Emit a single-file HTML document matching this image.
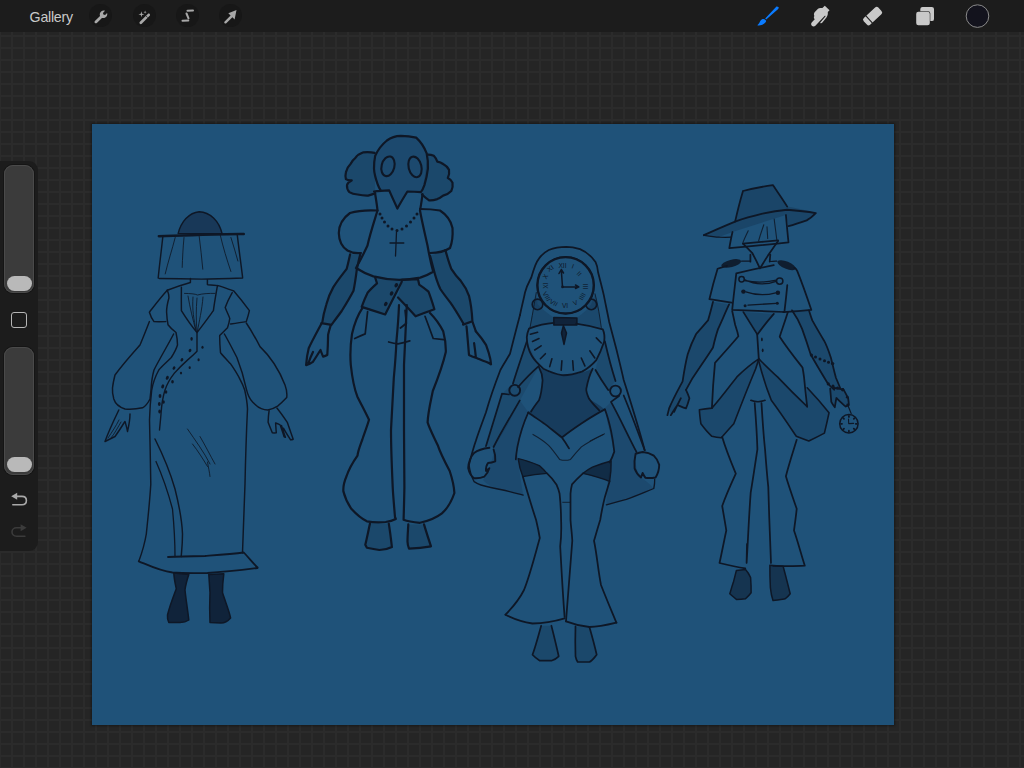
<!DOCTYPE html>
<html><head><meta charset="utf-8">
<style>
html,body{margin:0;padding:0;width:1024px;height:768px;overflow:hidden;background:#252525;font-family:"Liberation Sans",sans-serif;}
#grid{position:absolute;left:0;top:0;width:1024px;height:768px;
background-image:linear-gradient(to right,#2b2b2b 0,#2b2b2b 2px,transparent 2px),linear-gradient(to bottom,#2b2b2b 0,#2b2b2b 2px,transparent 2px);
background-size:12px 12px;background-position:-1px -1px;}
#bar{position:absolute;left:0;top:0;width:1024px;height:32px;background:#1c1c1c;}
#gal{position:absolute;left:29.6px;top:8.7px;font-size:14.2px;color:#c9c9c9;letter-spacing:-0.25px;}
.circ{position:absolute;top:4px;width:23px;height:23px;border-radius:50%;background:#171717;}
#side{position:absolute;left:-10px;top:161px;width:48px;height:390px;background:#1c1c1c;border-radius:9px;}
.track{position:absolute;left:4px;width:30px;border-radius:9px;background:#3b3b3b;box-shadow:inset 0 0 0 1px #4a4a4a, 0 0 0 1px #151515;}
.thumb{position:absolute;left:2.5px;width:25px;height:15px;border-radius:7.5px;background:#b9b9b9;}
#canvas{position:absolute;left:92px;top:124px;width:802px;height:601px;background:#1f5279;box-shadow:0 0 2px 1px rgba(0,0,0,0.35);}
svg{position:absolute;left:0;top:0;}
#art path{fill:none;stroke:#0e1726;stroke-width:1.45;stroke-linecap:round;stroke-linejoin:round;}
#art path.thin{stroke-width:1;opacity:0.85}
#art path.thick{stroke-width:2.4}
#art path.shade2{fill:#183858;stroke:#0e1726;stroke-width:1.4}
#art path.fillD{fill:#10233a;stroke:#0e1726;stroke-width:1.5}
#art path.shade{fill:rgba(15,35,60,0.22);stroke:none}
#art .dots ellipse, #art .dots circle{fill:none;stroke:#0e1726;stroke-width:1.1}
#art .fd{fill:#0e1726;stroke:none}
#fig2 path{stroke-width:2.2}
#fig3 path{stroke-width:1.75}
#fig4 path{stroke-width:1.75}
</style></head>
<body>
<div id="grid"></div>
<div id="bar"></div>
<div id="gal">Gallery</div>
<div class="circ" style="left:89px"></div>
<div class="circ" style="left:133px"></div>
<div class="circ" style="left:176px"></div>
<div class="circ" style="left:219px"></div>
<svg width="1024" height="32" viewBox="0 0 1024 32">
<!-- wrench -->
<g fill="#a8a8a8" stroke="none" transform="translate(95.5,22) scale(0.84) translate(-95.5,-22) translate(0.6,0.6)">
<path d="M94.2,20.2 L100.3,14.2 C99.6,12.3 100.1,10.3 101.6,9 C102.9,7.9 104.6,7.5 106.2,8.1 L103.8,10.6 L104.3,12.6 L106.3,13.1 L108.7,10.7 C109.2,12.3 108.8,14 107.7,15.2 C106.4,16.6 104.4,17.1 102.6,16.5 L96.5,22.5 C95.9,23.1 94.9,23.1 94.2,22.5 C93.6,21.9 93.6,20.9 94.2,20.2 Z"/>
</g>
<!-- magic wand -->
<g fill="#a8a8a8" transform="translate(140.5,23) scale(0.9) translate(-140.5,-23)">
<path d="M139.8,21.7 L148.6,12.9 C149.2,12.3 150.1,12.3 150.7,12.9 C151.3,13.5 151.3,14.4 150.7,15 L141.9,23.8 C141.3,24.4 140.4,24.4 139.8,23.8 C139.2,23.2 139.2,22.3 139.8,21.7 Z"/>
<path d="M146.5,15 L148.6,17.1" stroke="#171717" stroke-width="0.8"/>
<path d="M141.5,10 L142.2,12.6 L144.8,13.3 L142.2,14 L141.5,16.6 L140.8,14 L138.2,13.3 L140.8,12.6 Z"/>
<path d="M145.6,9.2 L146,10.6 L147.4,11 L146,11.4 L145.6,12.8 L145.2,11.4 L143.8,11 L145.2,10.6 Z"/>
</g>
<!-- selection S -->
<g stroke="#a8a8a8" stroke-width="2" stroke-linecap="round" fill="none">
<path d="M187.5,10.8 L193,10.6"/>
<path d="M186.5,13.5 L188.5,18.3"/>
<path d="M182.5,20.8 L188.3,20.5"/>
</g>
<!-- transform arrow -->
<g fill="#a8a8a8">
<path d="M236.5,10 L234.6,19.5 L232.4,17.3 L226.3,23.2 C225.8,23.7 225.1,23.7 224.6,23.2 C224.1,22.7 224.1,22 224.6,21.5 L230.6,15.5 L228.3,13.2 Z"/>
</g>
<!-- brush -->
<g fill="#0a7bff">
<path d="M778.3,7 C779,7.3 778.8,8.2 778.2,8.9 L766.2,19.6 L765.2,18.6 L776,6.9 C776.8,6.3 777.7,6.6 778.3,7 Z"/>
<path d="M765.5,19.9 C764,18.4 762,19 760.8,20.3 C759.6,21.6 759.8,23 757.3,25.3 C760.2,26 763.4,24.6 764.9,23 C766.2,21.7 766.6,20.9 765.5,19.9 Z"/>
</g>
<!-- smudge -->
<g fill="#c9c9c9" transform="translate(821,16) scale(1.08) translate(-821,-16) translate(-0.3,0)">
<path d="M824.8,6.5 L829.2,10.6 L827.6,12.4 C827.8,13.6 827.6,15.5 826.5,17.2 L822.8,21.8 C822,22.9 820.8,22.9 820.5,22.2 L825.2,16.8 C825.8,16 825.3,15.3 824.6,16 L816.1,25 C815.2,25.9 813.7,25.9 812.8,25 C811.9,24.1 812,22.8 812.9,21.9 L815.5,19 C814.7,18.3 814.3,17.1 815.2,16.1 C814.5,14.9 814.6,13.2 815.8,12 L818.3,9.5 C819.4,8.4 821.2,8.4 822.6,8.6 Z"/>
</g>
<!-- eraser -->
<g transform="translate(872.6,16.1) rotate(-43)">
<rect x="-10" y="-4.6" width="20" height="9.2" rx="2.3" fill="#c9c9c9"/>
<path d="M-4.8,-5 L-4.8,5" stroke="#1c1c1c" stroke-width="1.1"/>
</g>
<!-- layers -->
<rect x="920.3" y="6.9" width="13.7" height="14.2" rx="2.2" fill="#c9c9c9"/>
<rect x="915.5" y="11.2" width="14.8" height="14.4" rx="2.4" fill="#1c1c1c"/>
<rect x="916.2" y="11.8" width="13.6" height="13.5" rx="2.2" fill="#c9c9c9"/>
<!-- color -->
<circle cx="977.5" cy="16.1" r="11.3" fill="#13131d" stroke="#8a8a8a" stroke-width="1"/>
</svg>
<div id="side"></div>
<div class="track" style="top:165px;height:128px"><div class="thumb" style="top:111px"></div></div>
<div style="position:absolute;left:10.5px;top:311.5px;width:14px;height:14px;border:1.5px solid #b5b5b5;border-radius:3px;"></div>
<div class="track" style="top:347px;height:128px"><div class="thumb" style="top:110px"></div></div>
<svg width="40" height="560" viewBox="0 0 40 560" style="position:absolute;left:0;top:0">
<path d="M16.5,496.4 L22,496.4 C24.6,496.4 26.4,498.2 26.4,500.6 C26.4,503 24.6,504.8 22,504.8 L12.8,504.8" fill="none" stroke="#a9a9a9" stroke-width="1.6" stroke-linecap="round"/>
<path d="M11.2,496.3 L17.2,492.8 L17.2,499.8 Z" fill="#a9a9a9"/>
<path d="M21.8,527.8 L16.5,527.8 C13.9,527.8 12,529.6 12,532 C12,534.4 13.9,536.2 16.5,536.2 L24.9,536.2" fill="none" stroke="#3b3b3b" stroke-width="1.6" stroke-linecap="round"/>
<path d="M26.6,527.8 L20.6,524.3 L20.6,531.3 Z" fill="#3b3b3b"/>
</svg>
<div id="canvas"></div>
<svg id="art" width="1024" height="768" viewBox="0 0 1024 768"><g id="fig1">
<!-- hat dome -->
<path class="shade2" d="M178.1,233.6 C181,222 189,212.5 199.2,211.7 C210,212 219,221 222.1,233.6 Z"/>
<path class="thick" d="M158.8,236.3 C185,235.2 215,234.6 243.8,234"/>
<!-- veil -->
<path d="M162.9,235.8 C161.5,250 159.5,264 158.2,278 M237.3,235.2 C239,250 241,264 242.6,277.4 M159.4,278.5 C173,278.7 188,279 201.6,279.1 C215,279 229,278.5 242.6,278"/>
<path class="thin" d="M175.2,237.5 C172,250 168,262 165.2,273.9 M184,237.5 C183,248 182.5,258 182.2,267.4 M199.2,236.3 C200.5,247 201.8,258 202.8,269.2 M220.3,235.2 C223,247 227,260 230.9,271.5 M230.9,237.5 C233,245 236,253 237.9,261"/>
<!-- neck + shoulders line -->
<path d="M190.4,278.5 L190.4,282.5 C185,284 177,286.5 167.3,290.3 M207.4,279.7 L207.4,284.6 C211,285 214.5,285.4 218,285.6"/>
<!-- left shoulder puff -->
<path d="M167.3,290.3 C161,297 155,305 149.4,312.2 C150.5,316 152,319 154,321.6 C158,321.8 162,321.7 165.8,321.6"/>
<!-- bodice left edge -->
<path d="M167.3,290.3 C168.5,293 169,296 168.9,298 C167.5,303 166.5,308 166.6,312.2 C166.8,316 167.2,321 168,324.7 C170.5,328 173.5,330.5 176,332.5 C177,337 177.5,341 177.5,345 C176,350 173.5,354 171.3,357.5 C167,362 162,366 158.8,370 C155.5,376 153,383 151.7,390 C150.5,400 149.8,410 149.5,420 C150,440 150.5,465 150.8,484 C149.5,505 147.5,522 146.3,534 C144.5,545 141.5,554 138.8,561.3"/>
<!-- neckline V -->
<path d="M181.4,287.2 C181.3,295 181.3,303 181.4,310.6 C186,318 191.5,326 197,332.5 C203,325 208,318 213.4,310.6 C214.5,302 216,294 217.3,286.4"/>
<path class="thin" d="M184.5,293.4 C190,293.5 195,293.8 197.5,295 C203,293.5 209,293.3 215,293.4 M188,296 C190,308 193,320 196,331 M197,298 C196,310 196,320 197,331 M203,297 C202,310 199,322 197.5,331 M193,297 C192,310 194,320 196,330"/>
<!-- right shoulder puff -->
<path d="M218,285.6 C223,287 228,289 233.8,291 C239,297 244.5,304 249.4,310.6 C248.5,314.5 247.5,318 246.3,321.6 C241,322.5 235.5,323.3 230.6,324"/>
<!-- bodice right edge -->
<path d="M232.2,292.7 C229.5,297.5 227,302.5 225.2,307.5 C226.5,311 228.5,315 229.8,318.4 C229.3,322 228.5,325 227.5,327.8 C225,330.5 222,333 219.7,335.6 C219.6,341 220,347 220.5,352.8 C223.5,356.5 227,360 230.6,363.8 C234,369 237.5,374 240,379.4 C242,383 243.5,386.5 244.7,390 C246.5,398 247.3,404 247.5,409 C246.5,430 245.5,460 245,484 C244,510 243,535 242.5,552.8"/>
<!-- sleeves -->
<path d="M173.6,334 C168,345 160,358 154,370 C152,377 151.3,384 151,390 C150.5,394 150.3,396 150,399 C148,403 146,406 142.5,407.8 C137,409 131,409.5 125,409 C119,407 115,403 113.8,399 C112.5,394 112.3,390 112.5,388 C113,383 114,379 115,375 C123,364 132,354 140,345 C143.5,337 146.5,329 149.4,321.6"/>
<path d="M224.4,334 C229,342 233,350 236.9,357.5 C241,368 244,378 246.3,388.8 C247.5,394 248.5,398 252.8,402.2 C255.5,405 258.5,407.5 261.3,408.7 C263.5,409.6 265.5,410 267.8,410 C271,409.5 274.5,408 277.6,406.1 C281,403.5 284,400.5 286.7,397.6 C287.3,393 286.5,389 285,385 C280,372 272,358 260,346.6 C255.5,338 251,330 246.3,323"/>
<!-- hands -->
<path d="M118.8,410 C114,420 108,433 105,441.5 C108,440 112,438 115,436.5 C119,431 122,426 125,421.5 C126,425 127,428 127.5,431.5 C129,425 130,419 130,414"/>
<path class="thin" d="M108,438 C112,432 116,426 119,420 M111,438 C115,433 118,427 121,422"/>
<path d="M269.1,410.6 C268.5,414.5 268.2,418.5 268.1,422.3 C269.5,426 271,429.5 272.3,432.8 C273.6,433 275,433 276.3,432.8 C276,429.5 275.8,426 275.6,423 C277,423.5 278.8,424 280.2,425 C281.5,429 283,433 284.1,436.7 C284.5,437 285,437.2 285.4,437.3 C284,433.5 282.8,429.5 281.5,425.6 M276.9,408 C280.5,412.5 284,417.5 287.3,422.3 C289.2,428 291.2,433.5 293.2,439.3 C292.4,439.6 291.5,439.8 290.6,439.9 C288,436 285.5,432 283.4,428.2"/>
<!-- buttons -->
<g>
<ellipse cx="191.6" cy="338.8" rx="1.2" ry="1.9" class="fd"/>
<ellipse cx="190" cy="350.5" rx="1.3" ry="1.8" class="fd" transform="rotate(30 190 350.5)"/>
<ellipse cx="181.9" cy="359.8" rx="1.3" ry="1.8" class="fd" transform="rotate(30 181.9 359.8)"/>
<ellipse cx="174" cy="368.1" rx="1.3" ry="1.8" class="fd" transform="rotate(30 174 368.1)"/>
<ellipse cx="167.3" cy="377.8" rx="1.4" ry="2.1" class="fd" transform="rotate(25 167.3 377.8)"/>
<ellipse cx="162.7" cy="386.4" rx="1.4" ry="2.1" class="fd" transform="rotate(20 162.7 386.4)"/>
<ellipse cx="160" cy="396" rx="1.4" ry="2" class="fd"/>
<ellipse cx="159.3" cy="404" rx="1.4" ry="2" class="fd"/>
<ellipse cx="159.6" cy="411.5" rx="1.3" ry="1.9" class="fd"/>
<ellipse cx="202.5" cy="347.3" rx="1.1" ry="1.5" class="fd"/>
<ellipse cx="198.6" cy="359.8" rx="1.1" ry="1.5" class="fd"/>
<ellipse cx="189.7" cy="367.7" rx="1.1" ry="1.4" class="fd"/>
<ellipse cx="181" cy="373.1" rx="1.1" ry="1.4" class="fd"/>
<ellipse cx="172.5" cy="381.7" rx="1.3" ry="1.8" class="fd"/>
<ellipse cx="166" cy="392" rx="1.3" ry="1.8" class="fd"/>
<ellipse cx="163.5" cy="402" rx="1.3" ry="1.8" class="fd"/>
</g>
<path style="stroke-width:1.4" d="M197,332.5 C197,340 197,346 197,351.3 C194,354.5 190.5,357.5 186.9,360.6 C182.5,364.5 178.5,368.5 174.4,373.1 C170.5,378 167,384 165,390 C162.5,398 161.5,406 161,414 C160.5,420 160,425 159.5,430"/>
<!-- skirt inner panel -->
<path d="M155,439 C163,455 171,475 175,489 C179,505 182,520 182.5,534 C182.5,545 181.5,552 181.2,556.5"/>
<path style="stroke-width:1.3" d="M156,461.5 C162,475 168,492 172.5,509 C174,525 175,540 175,556.5"/>
<!-- fold scribble -->
<path class="thin" d="M187.5,429 C195,440 204,452 210,464 M192.5,444 C198,451 203,459 207.5,466.5 M200,436.5 C205,445 210,455 215,464 M207.5,462 C208.5,468 209.5,472 210,476.5"/>
<!-- hem -->
<path style="stroke-width:1.8" d="M138.8,561.3 C150,566 160,571 172.5,572.5 C185,573.5 196,573.2 207.5,573 C225,572 242,570 257.5,568"/>
<path style="stroke-width:1.8" d="M168,557 C180,556.5 195,556.2 205,556 C218,555 232,554 243.8,552.5 C249,558 253,563 257.5,567.5"/>
<!-- legs -->
<path class="fillD" d="M173.8,573 L188.8,574.5 C187,580 185.5,585 185,590 C186,600 188,612 188.8,620 C186,622 182,622.5 180,622.5 L168.8,622.5 C167.5,620 167.3,617 167.5,615 C170,605 174,595 176.3,588.8 C175,583 174,578 173.8,573 Z"/>
<path class="fillD" d="M208.8,574.4 L223.8,573.8 C223,580 222.5,586 222.5,592.5 C225,601 229,610 230.6,618 C228,621 224,623 221,623 L210,622.5 C209.5,612 209.6,602 210,592.5 C209.5,586 209.2,580 208.8,574.4 Z"/>
</g>
<g id="fig2">
<!-- hair puffs -->
<path class="shade" d="M374.6,152.9 C371,152 367,152 363.4,152.3 C360,153.5 357,155.5 355.2,158.1 C353,159.8 351.5,161.8 350.5,164 C348,166.5 346.5,169 345.9,172.2 C345.3,175 345.3,177.5 345.9,179.2 C347.5,180.4 349.5,180.6 351.7,180.4 C349,181.5 347.5,183 347,185.1 C346.8,188 347.7,190.5 349.4,192.1 C351.8,193.7 354.6,194.3 357.6,194.5 C361,195.3 364.5,195.7 368.1,195.6 C370.5,195 373,194.3 375.2,193.3 Z"/>
<path d="M374.6,152.9 C371,152 367,152 363.4,152.3 C360,153.5 357,155.5 355.2,158.1 C353,159.8 351.5,161.8 350.5,164 C348,166.5 346.5,169 345.9,172.2 C345.3,175 345.3,177.5 345.9,179.2 C347.5,180.4 349.5,180.6 351.7,180.4 C349,181.5 347.5,183 347,185.1 C346.8,188 347.7,190.5 349.4,192.1 C351.8,193.7 354.6,194.3 357.6,194.5 C361,195.3 364.5,195.7 368.1,195.6 C370.5,195 373,194.3 375.2,193.3"/>
<path class="shade" d="M427.9,154.6 C430,154.6 432,155 433.8,155.8 C435.5,157.5 436.5,159.5 437.3,161.6 C439.5,162 441.5,162.8 443.1,164 C446,165.5 448,167.5 449,169.8 C449.5,172.5 449,175.5 447.8,178 C450,179 451.7,180.7 452.5,182.7 C453,185.5 452.5,188.5 451.3,190.9 C449,193.3 446,194.8 443.1,195.6 C441.3,197 439.3,198.3 437.3,199.1 C434.5,200 431.5,200.5 429.1,200.3 C426.5,198.5 424,196.5 422,194.5 Z"/>
<path d="M427.9,154.6 C430,154.6 432,155 433.8,155.8 C435.5,157.5 436.5,159.5 437.3,161.6 C439.5,162 441.5,162.8 443.1,164 C446,165.5 448,167.5 449,169.8 C449.5,172.5 449,175.5 447.8,178 C450,179 451.7,180.7 452.5,182.7 C453,185.5 452.5,188.5 451.3,190.9 C449,193.3 446,194.8 443.1,195.6 C441.3,197 439.3,198.3 437.3,199.1 C434.5,200 431.5,200.5 429.1,200.3 C426.5,198.5 424,196.5 422,194.5"/>
<!-- mask -->
<path class="shade" style="fill:rgba(15,35,60,0.18)" d="M374,191.5 C376.5,191.3 378.8,191.1 381,190.9 C379.5,188.7 378.3,186.3 377.5,183.9 C375.5,178 374.2,173 374,168.7 C374,163 374.5,159 375.2,155.8 C378,149.5 382,144.5 386.9,140.5 C391,137.5 396,136 400.9,135.9 C406,136 411,136.5 416.2,137.6 C421,142 424.5,147.5 426.7,153.4 C427.8,158.5 428.2,163.5 427.9,168.7 C427.2,174.5 426,180 424.4,185.1 C423.4,188 422.2,190.5 420.9,192.1 C416.5,191.8 412,191.6 407.4,191.5 C404,197 400.6,202.5 397.4,208.5 C394.6,202.5 391.8,196.5 389.2,190.4 C384,190.7 379,191 374,191.5 Z"/>
<path style="stroke-width:2.2" d="M374,191.5 C376.5,191.3 378.8,191.1 381,190.9 C379.5,188.7 378.3,186.3 377.5,183.9 C375.5,178 374.2,173 374,168.7 C374,163 374.5,159 375.2,155.8 C378,149.5 382,144.5 386.9,140.5 C391,137.5 396,136 400.9,135.9 C406,136 411,136.5 416.2,137.6 C421,142 424.5,147.5 426.7,153.4 C427.8,158.5 428.2,163.5 427.9,168.7 C427.2,174.5 426,180 424.4,185.1 C423.4,188 422.2,190.5 420.9,192.1 C416.5,191.8 412,191.6 407.4,191.5 C404,197 400.6,202.5 397.4,208.5 C394.6,202.5 391.8,196.5 389.2,190.4 C384,190.7 379,191 374,191.5 Z"/>
<ellipse cx="388" cy="166.3" rx="6.4" ry="10" transform="rotate(14 388 166.3)" style="fill:none;stroke:#0e1726;stroke-width:2.1"/>
<ellipse cx="415" cy="166.9" rx="6.4" ry="10.5" transform="rotate(-14 415 166.9)" style="fill:none;stroke:#0e1726;stroke-width:2.1"/>
<!-- shirt -->
<path d="M375,193 C376,199 377,205 377.5,210.5 C374,222 370,234 367.5,245.5 C364,253 360,261 356,268 C361.5,271.5 367.5,274.5 373.4,276.4 C382,278.6 390.5,279.8 399.2,279.9 C406.5,279.7 413.5,278.9 420.3,277.6 C425,276 429.5,274 433.2,271.7 C431,264 429,254 427.5,245.5 C425,234 422,222 420,210.5 C421,205 422,199 422.5,194"/>
<!-- sleeves -->
<path d="M377.5,210.5 C368,210 358,210.5 350,213 C343,218 339,225 338.8,233 C339,241 342,247 347.5,250.5 C352,253 357,253.5 361,253"/>
<path d="M420,209 C427,209 434,209.5 440,210.5 C447,215 451,221 452.5,228 C453,236 452,243 450,248 C444,252 437,253 430,253"/>
<!-- necklace -->
<g>
<circle cx="380" cy="214" r="1.5" class="fd"/><circle cx="382" cy="218" r="1.5" class="fd"/><circle cx="384.5" cy="222" r="1.5" class="fd"/><circle cx="388" cy="226" r="1.5" class="fd"/><circle cx="392" cy="229" r="1.5" class="fd"/><circle cx="397" cy="230.5" r="1.5" class="fd"/><circle cx="402" cy="229" r="1.5" class="fd"/><circle cx="406.5" cy="226" r="1.5" class="fd"/><circle cx="410.5" cy="222" r="1.5" class="fd"/><circle cx="414" cy="218" r="1.5" class="fd"/><circle cx="417" cy="214" r="1.5" class="fd"/>
</g>
<path style="stroke-width:1.3" d="M396.5,232 L395.5,256 M390,243 L403.8,243"/>
<!-- arms -->
<path class="shade" d="M350.1,254.4 C349,259 348,264 346.7,268.8 C342,275 337,281 333.2,287.4 C330,293 328,298.5 326.4,304.3 C324.5,310.5 323,316.5 322.2,322.9 L331.5,324.6 C335,320 338.5,315.5 341.7,311 C346,304 350,297.5 353.5,290.7 C355,283.5 356,276 356.9,268.8 C358,264 359,259 360.3,254.4 Z"/>
<path d="M350.1,254.4 C349,259 348,264 346.7,268.8 C342,275 337,281 333.2,287.4 C330,293 328,298.5 326.4,304.3 C324.5,310.5 323,316.5 322.2,322.9 M360.3,254.4 C359,259 358,264 356.9,268.8 C356,276 355,283.5 353.5,290.7 C350,297.5 346,304 341.7,311 C338.5,315.5 335,320 331.5,324.6 M321.4,323.2 L331.5,324.8"/>
<path class="shade" d="M445.4,250.1 C447,256 449,263 451.3,268.8 C454,273 457,277 460.6,280.6 C464,285 467,290 469,295.8 C471,304 472,313 472.4,321.2 L463.1,323 C459,316 455,309 450.4,302.6 C446,297 443,293 440.3,289 C437,282 435,275 433.5,268.8 C432,263 431,259 430.1,256 Z"/>
<path d="M445.4,250.1 C447,256 449,263 451.3,268.8 C454,273 457,277 460.6,280.6 C464,285 467,290 469,295.8 C471,304 472,313 472.4,321.2 C473.5,325 474.8,328 475.8,331.3 M430.1,256 C431,259 432,263 433.5,268.8 C435,275 437,282 440.3,289 C443,293 446,297 450.4,302.6 C455,309 459,316 463.1,323 M463.1,324.6 L472.4,321.2"/>
<!-- hands -->
<path d="M321.4,323.7 C317,332 312.5,340 308.7,348.2 C307.2,354 306.5,359.5 306.1,365.2 C308.5,364.3 310.8,363.2 312.9,361.8 C315.5,358 318,354 320.5,350 C321.3,352.3 322.2,354.5 323.1,356.7 C324.5,356.2 326,355.6 327.3,355 C327.8,348 328,341.5 328.1,334.7 C328.8,331.5 329.7,328.5 330.7,325.4 M313,352 C311,356 309.5,360 308.5,363"/>
<path d="M466.5,326.3 C467.5,336 468.2,346 469,355 C472,356.5 475,357.5 477.5,358.4 C480,359.5 483,361 486,361.8 C488,362.5 490,363.5 491,364.3 C490.8,362 490.5,360 490.2,358.4 C489,353 487.5,349 486,344.9 C483,340 479,335 475.8,331.3 M474.1,343.2 C474.8,348 475.3,352 475.8,356.7"/>
<!-- peplum -->
<path class="shade" d="M375.2,277.6 C375.8,279.5 376.4,281.5 377,283.4 C373.5,286.5 370.2,289.5 367.6,292.8 C365.3,297.5 363.4,302 361.7,306.9 C369.5,309.5 377.5,312 385.2,314.5 C390.5,304 396,293 401.6,282.3 C401.8,281.5 401.9,280.7 402,279.9 Z"/>
<path d="M375.2,277.6 C375.8,279.5 376.4,281.5 377,283.4 C373.5,286.5 370.2,289.5 367.6,292.8 C365.3,297.5 363.4,302 361.7,306.9 C369.5,309.5 377.5,312 385.2,314.5 C390.5,304 396,293 401.6,282.3 C401.8,281.5 401.9,280.7 402,279.9"/>
<path class="shade" d="M402.8,279.9 C407.8,279.8 413,279.5 418,279.3 C418.4,281 418.8,282.8 419.2,284.6 C422.5,286.8 425.6,289.2 428.5,291.7 C430.8,297.5 432.6,303.3 434.4,309.2 C428,311.5 421.8,314 415.6,316.3 C410,310 404.2,303.8 398,297.5 L401.6,282.3 Z"/>
<path d="M402.8,279.9 C407.8,279.8 413,279.5 418,279.3 C418.4,281 418.8,282.8 419.2,284.6 C422.5,286.8 425.6,289.2 428.5,291.7 C430.8,297.5 432.6,303.3 434.4,309.2 C428,311.5 421.8,314 415.6,316.3 C410,310 404.2,303.8 398,297.5"/>
<ellipse cx="396.3" cy="285.2" rx="1.7" ry="2.3" transform="rotate(30 396.3 285.2)" class="fd"/>
<ellipse cx="391.6" cy="293.4" rx="1.7" ry="2.3" transform="rotate(30 391.6 293.4)" class="fd"/>
<ellipse cx="385.8" cy="304" rx="1.7" ry="2.3" transform="rotate(30 385.8 304)" class="fd"/>
<!-- pants -->
<path d="M362.5,307.8 C357,316 354,325 352,333.9 C350.5,344 350,355 350.8,365 C352,376 354,388 357.3,396.4 C361,404 366,413 369,419.8 C367,427 364,434 362.2,440 C360,446 358,451 357.5,455.6 C353,462 349,469 346.6,476 C344,482 343,487 343.4,491.6 C345,498 348,504 351.3,508.8 C357,515 362,519 366.9,521.3 C373,522.5 380,522.5 385.6,522 C390,521.5 393,520.5 395.8,519 L395,517 C394,505 393,494 392.7,487 C392,470 391,450 391,430 C392,410 393,390 393.8,378 C395,365 396,352 396.4,341.7 C397.5,330 398.5,318 399,305.2"/>
<path d="M406.8,305 C406,320 405,345 404,365 C404,390 404,410 404,430 C404,450 404.2,470 404.4,487 C404.2,500 403.8,512 403.6,519.7 C407,521 412,522 420,522.8 C428,521 436,518 441.9,513.4 C448,508 452,500 454.4,493 C454,485 452,478 449.7,471 C445,462 440,452 438,445.8 C434,437 430,430 427.6,422.4 C428,412 431,400 432.8,391 C438,378 443,364 445.8,352 C446,345 445,338 443.2,331.3 C439,323 434,317 430,313"/>
<path style="stroke-width:1.7" d="M354.7,338.5 C358.3,336.8 361.8,335.3 365.2,333.9 C366,326.5 366.8,319 367.6,311.6 M425,316.3 C427.8,323.7 430.5,331 433.2,338.5 C436.8,338.9 440.3,339.3 443.8,339.7"/><path style="stroke-width:1.8" d="M388.7,342 C391.8,342.8 395,343.5 398,343.8 C402,343.3 406,342.2 409.8,340.9 M405.1,310.4 C405.6,314.7 406,319 406.3,323.3 C404.3,325 402.3,326.5 400.4,328"/>
<!-- feet -->
<path class="shade" d="M370,523.6 L388.8,523.6 C390,531 391,539 391.9,547 C388,549 384,550 379.4,550 C375,549.5 370,548.5 366.9,547.8 L365.3,544.7 C367,538 368.5,530 370,523.6 Z"/>
<path d="M370,523.6 C368.5,530 367,538 365.3,544.7 L366.9,547.8 C370,548.5 375,549.5 379.4,550 C384,550 388,549 391.9,547 C391,539 390,531 388.8,523.6"/>
<path class="shade" d="M408.3,524.4 L424,524.4 C426,531 428.5,539 431,546.3 C424,547.5 416,548.3 409,548.6 C408,546 407.5,544 407.5,541.6 C407.5,536 408,530 408.3,524.4 Z"/>
<path d="M408.3,524.4 C408,530 407.5,536 407.5,541.6 C407.5,544 408,546 409,548.6 C416,548.3 424,547.5 431,546.3 C428.5,539 426,531 424,524.4"/>
</g>
<g id="fig3">
<!-- veil shading -->
<path class="shade" style="fill:rgba(15,35,60,0.2)" d="M537,293 C534,305 531,318 530,327.5 L553.8,322.5 L553.8,317.5 C548,314 542,309 537.5,304 Z"/>
<path class="shade" style="fill:rgba(15,35,60,0.2)" d="M595,293.8 C598,305 600,318 601.3,327.5 L576.9,322.5 L576.9,317.5 C583,314 588,309 591.3,304 Z"/>
<path class="shade" style="fill:rgba(15,35,60,0.17)" d="M526.8,341.5 C522,356 517,370 513,383.5 L502,393.7 C497,410 491,430 486,446.1 L493.6,447 C500,438 507,428 519.8,400.4 L539,365.9 Z"/>
<path class="shade" style="fill:rgba(15,35,60,0.18)" d="M528.3,412.3 C523,428 518,444 516.8,448.8 C516.5,452 517,455 518.2,458.2 C519,470 521,482 523.2,495.2 C515,493 508,491 502.9,490 C495,488 488,486 483,480 C486,476 489,470 491,462 C493,458 494,452 493.6,447 C501,436 510,420 519.8,400.4 Z"/>
<path class="shade" style="fill:rgba(15,35,60,0.17)" d="M604.9,341.5 C608,355 612,370 615.5,381 L608.2,390 C604,384 600,378 595.5,370 C597,362 600,352 604.9,341.5 Z"/>
<path class="shade" style="fill:rgba(15,35,60,0.18)" d="M604.6,408.3 C606,413 607,418 607.3,422.8 C610,432 612,442 613.7,452 C611,460 609,470 608.2,477.5 C607,487 606.5,496 606.4,504.9 C613,503 620,501 626.4,499.4 C636,496 645,492 653.8,488.5 C650,484 645,480 641,477.5 C637,472 635,466 635.6,453.8 C628,436 620,418 611,401.9 Z"/>
<!-- veil outline -->
<path d="M520,315 C522,305 524,298 525,292.5 C527,285 529,282 531.3,277.5 C534,268 536,262 538.8,258.8 C542,254 545,252 548.8,250 C554,248 560,247 566.3,246.9 C571,247 576,248 580,249.1 C587,252 592,257 595.5,261.9 C597,265 597.8,269 598.2,272.8 C600,280 602,287 603.7,294.7 C605.5,304 607.5,313 609.2,322 C611.5,331 614,340 616.4,349.3 C619,360 621.5,370 623.7,380 C630,400 638,425 644.7,450.2"/>
<path d="M520,315 C516,330 513,342 510,353.8 C507,359 503,365 500.4,370 C495,384 490,398 486,412.3 C482.5,422 479,431 475.8,441 C473,449 471,457 469,464.7"/>
<path class="thin" d="M536.3,292.5 C534,305 532,318 530,327.5 M595,293.8 C598,305 600,318 601.3,327.5"/>
<!-- clock -->
<circle cx="565.6" cy="285.3" r="28.3" style="fill:none;stroke:#0e1726;stroke-width:2.2"/>
<circle cx="537.5" cy="304.4" r="5.3" style="fill:rgba(15,35,60,0.2);stroke:#0e1726;stroke-width:1.6"/>
<circle cx="591.3" cy="304.4" r="5.3" style="fill:rgba(15,35,60,0.2);stroke:#0e1726;stroke-width:1.6"/>
<circle cx="565.6" cy="285.3" r="28" style="fill:#1f5279;stroke:#0e1726;stroke-width:2"/>
<path style="stroke-width:1.5" d="M562.5,286.9 L561.3,270 M559,273.5 L561.3,269.5 L563.5,273 M562.5,286.9 L578.8,286.9 M575.5,285 L578.8,286.9 L575.5,288.5"/>
<circle cx="562.5" cy="286.9" r="1.3" class="fd"/>
<g style="font-family:'Liberation Sans',sans-serif;font-size:6.6px;font-weight:normal;fill:#0e1726;text-anchor:middle">
<text x="562.5" y="268" transform="rotate(0 562.5 266)">XII</text>
<text x="573" y="268.5" transform="rotate(20 573 266)">I</text>
<text x="579" y="276" transform="rotate(45 579 274)">II</text>
<text x="585" y="288.5" transform="rotate(90 585 286.5)">III</text>
<text x="582.5" y="298.5" transform="rotate(-60 582.5 296.5)">IIII</text>
<text x="575.5" y="305" transform="rotate(-20 575.5 303)">V</text>
<text x="565" y="307.5" transform="rotate(0 565 305.5)">VI</text>
<text x="553.5" y="305" transform="rotate(30 553.5 303)">VII</text>
<text x="546.5" y="298.5" transform="rotate(60 546.5 296.5)">VIII</text>
<text x="544.5" y="287.5" transform="rotate(90 544.5 285.5)">IX</text>
<text x="545.5" y="278.5" transform="rotate(-60 545.5 276.5)">X</text>
<text x="550.5" y="270.5" transform="rotate(-35 550.5 268.5)">XI</text>
</g>
<!-- choker + pendant -->
<path class="fillD" d="M553.8,317.5 L576.9,318 L576.9,325 L553.8,325 Z"/>
<path class="fillD" d="M563.4,325.7 L566.5,333 L564,344.4 L561.5,333 Z"/>
<!-- semicircle collar -->
<path style="stroke-width:1.8" d="M529,328.6 C536,326 545,323.5 553.8,322.9 M576.2,323.6 C586,325 595,327 602.8,329.3 C604.5,333 604.8,337 604.2,341.5 C602,348 599,355 596.3,360.1 C592,365 587,369 582,371.6 C575,374 568,375.5 561.9,375.2 C555,374 548,371 543.3,368.7 C537,363 533,358 531.8,355.8 C528,349 526.8,343 526.8,337.2 C527,334 528,331 529,328.6"/>
<path style="stroke-width:1.6" d="M530.4,334.3 L537.6,332.2 M532.5,341.5 L539,338.6 M534.7,350 L541.1,345.8 M540.4,358.7 L545.4,353.7 M549.7,366.6 L551.9,358.7 M561.2,370.2 L561.9,360.8 M573.4,370.2 L572.7,360.8 M584.9,365.9 L581.3,358 M594.8,358 L589.8,350.8 M601.3,343 L596.3,337.9"/>
<!-- arms -->
<path d="M539,365.9 C532,372 526,378 518.1,387 M526.8,341.5 C522,356 517,370 513,383.5"/>
<circle cx="514.7" cy="390.3" r="5.4" style="fill:none;stroke:#0e1726;stroke-width:1.9"/>
<path d="M502,393.7 C497,410 491,430 486,446.1 M519.8,400.4 C511,416 501,432 493.6,447 M502,393.7 L509,394.5"/>
<path d="M595.5,370 C600,378 604,384 608.2,390 M604.9,341.5 C608,355 612,370 615.5,381"/>
<circle cx="615.5" cy="391" r="5.4" style="fill:none;stroke:#0e1726;stroke-width:1.9"/>
<path d="M623.7,395.5 C631,413 638,432 644.7,450.2 M611,401.9 C620,418 628,436 636.5,452 M611,401.9 L619,396"/>

<!-- hands -->
<path style="stroke-width:1.9" d="M489.4,447.8 C484,448.5 478,450 474.1,452.9 C470.5,457 468.5,462 468.2,468.1 C469,472 471,476 474.1,478.2 C478,478.5 481.5,477.8 484.3,476.6 C486.5,474.5 488.5,471.5 489.4,468.1 L486,471 C485.8,468 486.5,465 488,463 C491,462.8 493.5,462 495.3,461.3 C495.5,457 495,453 493.6,449.5"/>
<path style="stroke-width:1.9" d="M635.6,453.8 C634.5,458.5 634.2,463.5 634.6,468.4 C636,472.5 638.5,475.5 641,477.5 L642.6,473 C643.5,475 644.5,476.5 645.5,477.8 C649,478.3 652.5,478 655.6,477.5 C657.8,474 659.2,469.5 659.2,464.8 C658.2,461 656.3,458 653.8,455.6 C650,453.3 646.5,452.3 642.8,452 C640,452.3 637.5,453 635.6,453.8"/>
<!-- veil bottoms -->
<path style="stroke-width:1.3" d="M469,464.7 C470,472 472,478 474.1,481.6 C477,483.5 479,484.5 480.9,485 C488,487 495,488.5 502.9,490 C510,491.8 517,493.5 523.2,495.2"/>
<path style="stroke-width:1.3" d="M606.4,504.9 C613,503 620,501 626.4,499.4 C636,496 645,492 653.8,488.5 C654.5,485 654.8,482 654.7,479.3"/>
<path class="thin" d="M590,441 C595,438.5 600,436 604.6,433.8"/>
<!-- leotard -->
<path class="shade" style="fill:rgba(12,30,55,0.42)" d="M539,367.3 C541,371 542.5,376 542.6,380.2 C542,388 541,395 539,400.2 C536,404 532,409 528.3,412.5 C533,416 538.5,419.5 544,423.4 C550,428 556,433 561.9,437.5 C568,432.5 574.5,428 581.4,423.4 C589,418.5 597,413.5 604.9,409.4 C599,405 594,402 589.1,398.8 C587,394 586,391 586.3,388.8 C588,380 590,374 592.7,368.7 C582,373 570,376 561.9,375.2 C553,374 545,371 539,367.3 Z"/>
<path d="M539,367.3 C541,371 542.5,376 542.6,380.2 C542,388 541,395 539,400.2 C536,404 533,408 531.1,411.7 M599.2,410.3 C594,405 591,402 589.1,398.8 C587,394 586,391 586.3,388.8 C588,380 590,374 592.7,368.7"/>
<path style="stroke-width:1.8" d="M528.3,412.5 C533,416 538.5,419.5 544,423.4 C550,428 556,433 561.9,437.5 C564.5,441 567,445 569,448.4 M561.9,437.5 C568,432.5 574.5,428 581.4,423.4 C589,418.5 597,413.5 604.9,409.4"/>
<!-- hips -->
<path d="M528.3,412.5 C523,424 519.5,436 517.4,446.9 C516.8,451 516,455 515.8,459.4 M604.9,409.4 C607.5,416 609.5,424 611.1,431.3 C612.5,438 613.5,445 614.3,451.6 C613,455.5 611.5,459 609.6,462.5"/>
<path class="thin" style="stroke-width:1.1" d="M533,434.4 C538.5,437.5 544,441 548.6,445.3 C553,450 556.5,455 559.6,459.4 C563,460.5 567,460.5 570.5,459.4 C574,455 577.5,451 581.4,446.9 C588,442 596,438 603.3,434.4"/>
<!-- shorts dark patches -->
<path class="fillD" style="fill:rgba(12,28,48,0.7);stroke-width:1.4" d="M518.2,458.6 C525,460 532,462.5 539.3,465.6 C542,468 545,471 547,473.4 C539,474 531,475 522.8,476.6 C520.5,471 519,465 518.2,458.6 Z"/>
<path class="fillD" style="fill:rgba(12,28,48,0.7);stroke-width:1.4" d="M611.1,461 C604,462.8 598,465 592.4,467.2 C589,469 586,471 583,473.4 C592,475.5 601,478 609.6,481.3 C610.8,474.5 611.3,467.5 611.1,461 Z"/>
<!-- legs -->
<path d="M522.8,476.6 C527,491 531.5,506 536.1,520 C537.5,526 538.8,532 539.8,538 C535,555 530,575 524,590 C519,600 512,608 505.5,614.7"/>
<path d="M547,473.4 C551,477 554,481 556.4,484.4 C558,488 559,491 559.6,493.8 C560.5,502 561,511 561.1,520 C561.5,530 561,540 560.2,546.3 C561.5,570 562.5,590 564.6,617"/>
<path d="M583,473.4 C579,477 575,481 572,484.4 C571,488 570.7,491 570.5,493.8 C570.5,502 570.5,511 570.5,520 C571,527 572,534 572.3,540.8 C570,568 568,595 566,621.3"/>
<path d="M609.6,481.3 C608,486.5 606.5,491.5 604.9,496.9 C603,504.5 601.5,512 600.2,520 C598,527 596,534 594,540.8 C597,555 598,570 601,585 C606,598 612,612 616.4,622.7"/>
<path class="thin" d="M562.7,502.3 L569.7,502.3"/>
<path style="stroke-width:1.8" d="M505.5,614.7 C514,619 523,622 532.5,623.5 C545,623.5 556,621 564.6,618.4 M566,621.3 C573,624 581,626 589.4,627 C598,627 607,625 616.4,622.7"/>
<!-- feet -->
<path class="shade" d="M541.2,625.7 L551.4,625.7 C554,636 556.5,646 558.7,656.3 C556,659 554,660 551.4,660.7 L539.8,660.7 C537,659 534.5,657 532.5,654.8 C536,645 538.5,635 541.2,625.7 Z"/>
<path style="stroke-width:1.7" d="M541.2,625.7 C538.5,635 536,645 532.5,654.8 C534.5,657 537,659 539.8,660.7 L551.4,660.7 C554,660 556,659 558.7,656.3 C556.5,646 554,636 551.4,625.7"/>
<path class="shade" d="M575.5,626.4 L589.4,627 C592,636 594.5,645 596.7,654.8 C594,658 592,661 589.4,662 L577.7,662 C576.5,660 575.8,658 575.5,656.3 C575.2,646 575.2,636 575.5,626.4 Z"/>
<path style="stroke-width:1.7" d="M575.5,626.4 C575.2,636 575.2,646 575.5,656.3 C575.8,658 576.5,660 577.7,662 L589.4,662 C592,661 594,658 596.7,654.8 C594.5,645 592,636 589.4,627"/>
</g>
<g id="fig4">
<!-- hat -->
<path class="shade" style="fill:rgba(12,30,55,0.25)" d="M743,191 C753,188.5 763,186.5 772.9,185.1 C777.5,192 782.5,199 787.2,206.6 C796,208 806,210.5 815.8,213.1 C813,216 810,218.5 806.7,220.3 C800.5,222.5 794.5,224.5 788.5,226.1 L785.9,215 L732.5,232 C727,234 722,235.5 719.5,237.2 C714,236.8 709,236 703.9,235.2 C714,230.5 724.5,226 735.1,221.6 C737.5,211 740,201 743,191 Z"/>
<path d="M743,191 C753,188.5 763,186.5 772.9,185.1 C777.5,192 782.5,199 787.2,206.6 M743,191 C740,201 737.5,211 735.1,221.6"/>
<path style="stroke-width:1.9" d="M703.9,235.2 C714,230.5 724.5,226 735.1,221.6 C744,218.5 753,216 762.5,213.7 C771,211.8 779,210.5 787.2,209.8 C797,210.5 806.5,211.5 815.8,213.1 C813,216 810,218.5 806.7,220.3 C800.5,222.5 794.5,224.5 788.5,226.1"/>
<path style="stroke-width:1.3" d="M703.9,235.2 C709,236 714,236.8 719.5,237.2 C723.5,237.4 727.5,237.4 731.2,237.2"/>
<!-- face block -->
<path d="M732.5,232 C731.2,237.5 730.2,243 729.3,248.2 C749,246.5 769,244.5 788.5,242.4 C787.5,233 786.7,224 785.9,215 M743,243.7 C755,242.5 767,241.5 778.1,240.4"/>
<path class="thin" style="stroke-width:1.1" d="M748.2,230.7 C746.5,234.5 744.5,238.5 743,242.4 M763.8,224.8 C762,230 760,235.5 758.6,241 M767,226.8 C767.2,230.5 767.5,234.5 767.7,238.5 M774.2,219 C775,226 776,233 776.8,239.8"/>
<!-- neck -->
<path d="M743,243.7 C746,246.7 749,249.7 752.1,252.8 C755,258 757.5,263 759.9,268.4 C763,263.5 766,258.5 769,254.1 C772,249.7 775,245.3 778.1,241 M750.4,254.7 L750.4,261.7 M770.3,254.7 L769.7,261.7"/>
<!-- epaulettes -->
<ellipse cx="731.2" cy="263.4" rx="10.2" ry="3.6" transform="rotate(-14 731.2 263.4)" style="fill:#0f1e30;stroke:none"/>
<ellipse cx="786.6" cy="265.2" rx="9.8" ry="3.6" transform="rotate(22 786.6 265.2)" style="fill:#0f1e30;stroke:none"/>
<path style="stroke-width:1.2" d="M741.6,261.2 C744.5,261 747.5,261 750.4,261.2 M769.7,261.5 C772,261.5 774.5,261 776.8,261.2"/>
<!-- cape -->
<path d="M717.6,268.8 C714.5,279 711.8,289 709.4,299.2 C716.8,300.3 724.2,301.5 731.6,302.7 M797.3,271.1 C802.5,284 807,297 811.3,309.8 C802,310.8 793,311.5 783.2,312.1 M717.6,268.8 C721,267.5 724,266.5 727,265.8 M797.3,271.1 C796.5,269.5 795.5,268.5 794.5,267.8"/>
<path d="M736.3,273.4 C748.5,270.5 761,267.8 773.8,265.2 M736.3,273.4 C735,285 733.5,297 732.2,309.8 C749.5,310.5 767,311.2 784.4,312 C785.5,303 786.5,294 787.3,285.2"/>
<!-- frogs -->
<path style="stroke-width:1.3" d="M744.5,279.5 C754,284.5 766,285 776.3,281.3 M744.5,280.5 C754,282.5 766,282.5 776.3,280.2 M745.8,291.8 C755,295 766,295.5 775.7,292.8 M748,305.2 C757,304.6 766,304 776.2,303.3"/>
<circle cx="741.6" cy="279.3" r="2.7" style="fill:none;stroke:#0e1726;stroke-width:1.5"/>
<circle cx="779.7" cy="281.1" r="3.2" style="fill:none;stroke:#0e1726;stroke-width:1.5"/>
<circle cx="743.4" cy="291.6" r="2.2" class="fd"/>
<circle cx="777.9" cy="292.8" r="2.2" class="fd"/>
<circle cx="745.1" cy="305.7" r="1.5" class="fd"/><circle cx="777.3" cy="303.3" r="1.5" class="fd"/>
<!-- arms -->
<path class="shade" style="fill:rgba(15,35,60,0.2)" d="M713,301.8 C711.5,308 710,314 708,320.4 C704,325 699.5,330 696.1,334 C693,340 690,347 687.7,354.3 C685.5,363 684,372 682.6,381.3 C678,390 673,399 669.1,408.4 L670.8,415.2 C673,412 675,408 677.5,405 C680,406 683,407.5 686,408.4 C687.5,405 688.5,401.5 689.4,398.2 C688,395 687,392 686,389.8 C690,382 695,374 699.5,367.8 C704,361 709,354 713,347.5 C714.5,341 716,335 718.1,328.9 C722,320.5 725.5,312 729.1,304.4 Z"/>
<path d="M713,301.8 C711.5,308 710,314 708,320.4 C704,325 699.5,330 696.1,334 C693,340 690,347 687.7,354.3 C685.5,363 684,372 682.6,381.3 C678,390 673,399 669.1,408.4 C668.5,411 668,413 667.4,415.2 M729.1,304.4 C725.5,312 722,320.5 718.1,328.9 C716,335 714.5,341 713,347.5 C709,354 704,361 699.5,367.8 C695,374 690,382 686,389.8"/>
<path class="shade" style="fill:rgba(15,35,60,0.2)" d="M792,310.3 C796,316 799.5,322.5 802.1,328.9 C805,337 808,346 810.6,354.3 C816,364 822,374 827.5,383 C829.5,385.5 832,388 834.3,389.8 L840.2,388.1 C839,385 837.5,381.5 836,378 C834,371 832.5,364 830.9,357.7 C829,352 827,346 824.1,340.7 C820,334 816,327 812.3,320.4 C811,317 810,313.5 808.9,310.3 Z"/>
<path d="M792,310.3 C796,316 799.5,322.5 802.1,328.9 C805,337 808,346 810.6,354.3 C816,364 822,374 827.5,383 C829.5,385.5 832,388 834.3,389.8 M808.9,310.3 C810,313.5 811,317 812.3,320.4 C816,327 820,334 824.1,340.7 C827,346 829,352 830.9,357.7 C832.5,364 834,371 836,378 C837.5,381.5 839,385 840.2,388.1"/>
<g><circle cx="811.4" cy="355.1" r="1.6" class="fd"/><circle cx="815.5" cy="357" r="1.5" class="fd"/><circle cx="820" cy="359" r="1.5" class="fd"/><circle cx="824.5" cy="360.8" r="1.5" class="fd"/><circle cx="828.5" cy="362.2" r="1.5" class="fd"/><circle cx="832.6" cy="363.6" r="1.7" class="fd"/>
<circle cx="828.3" cy="383.9" r="1.6" class="fd"/><circle cx="833" cy="386" r="1.5" class="fd"/><circle cx="837.5" cy="388" r="1.5" class="fd"/><circle cx="842.7" cy="389.8" r="1.6" class="fd"/></g>
<!-- coat -->
<path d="M732.2,311 C733.2,315.5 734.2,320.5 735.2,325 C736.2,328 737.5,331.5 738.4,336.3 C731,345 723,354 715,362.8 C713.5,378 712.5,393 711.9,408.1 M787.9,312.1 C786,318 784,324 782,329.7 C781.2,332 780.4,334.5 779.7,336.7 C787,348 795,358 802.5,367.5 C803,370 803.5,373 804,376.9 C805,387 806,397 807.2,406.6"/>
<path class="shade" style="fill:rgba(12,30,55,0.2)" d="M743.4,312.1 C748,319.5 752.5,327 757.4,334.4 C762.5,327.5 768,320.5 773.8,313.9 Z"/>
<path d="M743.4,312.1 C748,319.5 752.5,327 757.4,334.4 C762.5,327.5 768,320.5 773.8,313.9"/>
<path d="M757.2,334.7 C757.8,343 758.3,351 758.8,358.9"/>
<ellipse cx="761.9" cy="339.4" rx="0.9" ry="1.9" class="fd"/><ellipse cx="762.7" cy="350.3" rx="0.9" ry="1.9" class="fd"/>
<!-- coat flaps -->
<path class="shade" style="fill:rgba(15,35,60,0.2)" d="M758.8,358.9 C751,364 744,370 736.9,376.9 C729,387 721,398 711.9,408.1 C707.5,408.5 703.5,409 699.4,409.7 C699.6,414.5 700.2,419 700.9,423.8 C704,428 707.5,432.5 711.9,436.3 C715,437.2 718,437.7 721.3,437.8 C725.5,433 729.5,428.5 733.8,423.8 C741,405 748,387 755.6,369 C756.7,365.5 757.8,362 758.8,358.9 Z"/>
<path style="stroke-width:1.6" d="M758.8,358.9 C751,364 744,370 736.9,376.9 C729,387 721,398 711.9,408.1 C707.5,408.5 703.5,409 699.4,409.7 C699.6,414.5 700.2,419 700.9,423.8 C704,428 707.5,432.5 711.9,436.3 C715,437.2 718,437.7 721.3,437.8 C725.5,433 729.5,428.5 733.8,423.8 C741,405 748,387 755.6,369 C756.7,365.5 757.8,362 758.8,358.9"/>
<path class="shade" style="fill:rgba(15,35,60,0.2)" d="M758.8,358.9 C765,365 771,371 777.5,376.9 C787,387 797,397 807.2,406.6 C807.2,400 807.2,393 807.2,387.8 C815,396 822,404 829,412.8 C827.5,420 826,426.5 824.4,433.1 C819,436 814,438.5 808.8,441 C804.5,439.5 800.5,438 796.3,436.3 C788,424 780,412 771.3,400.3 C766,387 762,374 758.8,361.3 Z"/>
<path style="stroke-width:1.6" d="M758.8,358.9 C765,365 771,371 777.5,376.9 C787,387 797,397 807.2,406.6 M807.2,387.8 C815,396 822,404 829,412.8 C827.5,420 826,426.5 824.4,433.1 C819,436 814,438.5 808.8,441 C804.5,439.5 800.5,438 796.3,436.3 C788,424 780,412 771.3,400.3 C766,387 762,374 758.8,361.3"/>
<!-- hands -->
<path d="M686,389.8 C687.5,393 688.5,395.5 689.4,398.2 C688.5,401.5 687.5,405 686,408.4 C683,407.5 680,406 677.5,405 C675,408 673,412 670.8,415.2 M680.9,398.2 C678.5,403 676,407.5 674.1,411.8"/>
<path class="shade" style="fill:rgba(15,35,60,0.2)" d="M830.2,388.6 C830.5,393 831,397.5 831.3,401.9 C832.3,403.8 833.5,405.6 834.8,407.3 C835.3,404 835.8,401 836.4,398 C839.5,401 842.5,404 845.8,406.6 C846.8,406 847.8,405.5 848.9,405 C848.7,402.5 848.4,400 848.1,398 C846.5,395 845,392 843.4,389.4 Z"/>
<path d="M830.2,388.6 C830.5,393 831,397.5 831.3,401.9 C832.3,403.8 833.5,405.6 834.8,407.3 C835.3,404 835.8,401 836.4,398 C839.5,401 842.5,404 845.8,406.6 C846.8,406 847.8,405.5 848.9,405 C848.7,402.5 848.4,400 848.1,398 C846.5,395 845,392 843.4,389.4 M834,387.8 C837,388.5 840,389 842.7,389.4"/>
<circle cx="834" cy="387.8" r="1.4" class="fd"/><circle cx="842.7" cy="389.4" r="1.4" class="fd"/><circle cx="847.3" cy="397.2" r="1.4" class="fd"/><circle cx="847.7" cy="405" r="1.4" class="fd"/>
<path style="stroke-width:1.2" d="M847.7,405 C849,408 850.2,411 851.2,413.6"/>
<circle cx="848.9" cy="423.8" r="9.2" style="fill:none;stroke:#0e1726;stroke-width:1.5"/>
<path style="stroke-width:1.1" d="M848.5,419 L848.7,423.6 L853.6,423.4"/>
<g style="stroke:#0e1726;stroke-width:1"><path d="M848.9,415.9 L848.9,416.9 M856.8,423.8 L855.8,423.8 M848.9,431.7 L848.9,430.7 M841,423.8 L842,423.8 M854.5,418.2 L853.8,418.9 M854.5,429.4 L853.8,428.7 M843.3,429.4 L844,428.7 M843.3,418.2 L844,418.9"/></g>
<!-- pants -->
<path d="M722.2,437 C726,450 731,462 735.8,473.6 C731,484 726,495 722.2,506 C723.5,514 725,522 726.3,530.5 C724,541 722,552 719.5,563 C728,565 737,567 745.3,568.4 M754.7,403.2 C756,420 757,435 757.4,449.3 C755,465 753,479 750.7,492.6 C749,515 748,540 746.6,563 L747,544"/>
<path d="M761.5,403.2 C762.5,420 763.5,435 765,449 C766,462 767,475 768.3,487.2 C769,512 770,540 771,563 M796.7,439.8 C793,452 789,464 785.9,476.3 C789,487 793,498 796.7,508.8 C796,516 795,523 794,530.5 C798,542 801,554 804.8,565.7 C795,566 785,566.5 773,565.8"/>
<path style="stroke-width:1.6" d="M750.9,400.3 C755,402 761,402 765,400.3"/>
<!-- feet -->
<path class="fillD" style="fill:rgba(12,28,48,0.55)" d="M736.4,570.4 L745.5,569.4 C748,572 749.5,575 750.6,577.5 C751,583 751.2,588 751.1,592.8 C749.5,595 747.5,597 745.5,598.8 C742.5,599.2 739.5,599.4 736.4,599.4 C734,597.5 731.5,595.5 729.8,593.8 C731,590 732,586 733.3,582.6 C734.5,578 735.5,574 736.4,570.4 Z"/>
<path class="fillD" style="fill:rgba(12,28,48,0.55)" d="M769.9,565.3 L783.1,566.3 C785.5,575 788,585 790.2,593.8 C788.5,596 786.5,598 785.1,598.8 C781,599.4 777,600 773,600.4 C771.5,596 770.8,592 770.4,587.7 C770,580 769.8,572 769.9,565.3 Z"/>
</g>

</svg>
</body></html>
